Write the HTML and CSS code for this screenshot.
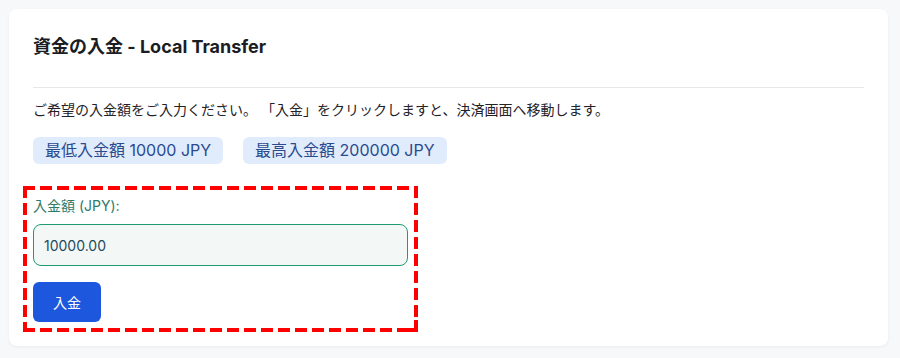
FILE: index.html
```html
<!DOCTYPE html>
<html lang="ja">
<head>
<meta charset="utf-8">
<link rel="stylesheet" href="styles.css">
</head>
<body>
<div class="card">
  <div class="card-header">
    <h2 class="title">資金の入金 - Local Transfer</h2>
  </div>
  <p class="desc">ご希望の入金額をご入力ください。 「入金」をクリックしますと、決済画面へ移動します。</p>
  <div class="limits">
    <span class="badge">最低入金額 10000 JPY</span>
    <span class="badge">最高入金額 200000 JPY</span>
  </div>
  <form class="deposit-form">
    <label class="label" for="amount">入金額 (JPY):</label>
    <input class="input" id="amount" type="text" value="10000.00">
    <button class="btn" type="button">入金</button>
  </form>
</div>
</body>
</html>
```

FILE: styles.css
```css
* { box-sizing: border-box; }
html, body { margin: 0; padding: 0; }
body {
  background: #f7f8fa;
  font-family: Inter, "Noto Sans CJK JP", sans-serif;
  padding: 9px 12px 12px 9px;
}
.card {
  background: #ffffff;
  border-radius: 8px;
  box-shadow: 0 1px 3px rgba(0,0,0,0.06);
  padding: 0 24px 14px 24px;
  width: 879px;
}
.card-header {
  padding: 24px 0 26px 0;
  border-bottom: 1px solid #e5e7eb;
}
.title {
  margin: 0;
  font-size: 18px;
  line-height: 28px;
  font-weight: 700;
  color: #1a1d24;
}
.desc {
  margin: 12px 0 0 0;
  font-size: 14px;
  line-height: 20px;
  color: #1f2227;
}
.limits {
  display: flex;
  gap: 20px;
  margin-top: 17px;
}
.badge {
  background: #e0ecfc;
  color: #2b4a8e;
  font-size: 16px;
  line-height: 23px;
  padding: 2px 12px;
  border-radius: 6px;
}
.deposit-form {
  margin: 22px -10px 0 -10px;
  width: 395px;
  display: flex;
  flex-direction: column;
  align-items: flex-start;
  padding: 10px;
  background-image:
    linear-gradient(#ff0000, #ff0000),
    linear-gradient(#ff0000, #ff0000),
    linear-gradient(#ff0000, #ff0000),
    linear-gradient(#ff0000, #ff0000),
    linear-gradient(90deg, #ff0000 12px, transparent 12px),
    linear-gradient(90deg, #ff0000 12px, transparent 12px),
    linear-gradient(180deg, #ff0000 12px, transparent 12px),
    linear-gradient(180deg, #ff0000 12px, transparent 12px);
  background-size: 4px 12px, 4px 12px, 12px 4px, 12px 4px, 17px 4px, 17px 4px, 4px 17px, 4px 17px;
  background-position: right top, right bottom, right bottom, left bottom, left top, left bottom, left top, right top;
  background-repeat: no-repeat, no-repeat, no-repeat, no-repeat, repeat-x, repeat-x, repeat-y, repeat-y;
}
.label {
  font-size: 14px;
  line-height: 20px;
  color: #2e7a66;
  margin-bottom: 8px;
}
.input {
  width: 100%;
  height: 42px;
  border: 1px solid #1f9c70;
  background: #f3f8f6;
  border-radius: 8px;
  padding: 0 10px;
  font-family: Inter, "Noto Sans CJK JP", sans-serif;
  font-size: 14px;
  color: #1e4a5e;
  outline: none;
}
.btn {
  margin-top: 16px;
  height: 40px;
  width: 68px;
  background: #1d57de;
  color: #ffffff;
  border: none;
  border-radius: 6px;
  font-family: Inter, "Noto Sans CJK JP", sans-serif;
  font-size: 14px;
  padding: 0;
}
```
